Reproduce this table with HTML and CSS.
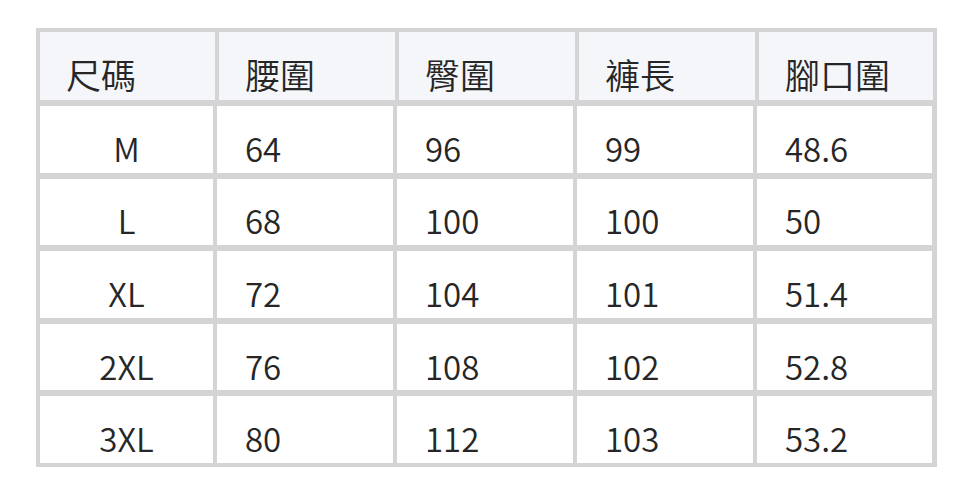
FILE: index.html
```html
<!DOCTYPE html>
<html lang="zh-Hant">
<head>
<meta charset="utf-8">
<link rel="stylesheet" href="styles.css">
<title>尺碼表</title>
</head>
<body>
<div class="table">
  <div class="row head">
    <div class="cell">尺碼</div>
    <div class="cell">腰圍</div>
    <div class="cell">臀圍</div>
    <div class="cell">褲長</div>
    <div class="cell">腳口圍</div>
  </div>
  <div class="body">
    <div class="row">
      <div class="cell size">M</div><div class="cell">64</div><div class="cell">96</div><div class="cell">99</div><div class="cell">48.6</div>
    </div>
    <div class="row">
      <div class="cell size">L</div><div class="cell">68</div><div class="cell">100</div><div class="cell">100</div><div class="cell">50</div>
    </div>
    <div class="row">
      <div class="cell size">XL</div><div class="cell">72</div><div class="cell">104</div><div class="cell">101</div><div class="cell">51.4</div>
    </div>
    <div class="row">
      <div class="cell size">2XL</div><div class="cell">76</div><div class="cell">108</div><div class="cell">102</div><div class="cell">52.8</div>
    </div>
    <div class="row">
      <div class="cell size">3XL</div><div class="cell">80</div><div class="cell">112</div><div class="cell">103</div><div class="cell">53.2</div>
    </div>
  </div>
</div>
</body>
</html>
```

FILE: styles.css
```css
html, body {
  margin: 0;
  padding: 0;
  background: #ffffff;
}
body {
  padding: 28px 35px 28px 36px;
  font-family: "Noto Sans CJK TC", "Noto Sans", sans-serif;
  font-weight: 350;
  color: #262626;
}
.table {
  width: 901px;
  height: 439px;
  box-sizing: border-box;
  background: #d4d4d4;
  padding: 4px;
  display: flex;
  flex-direction: column;
  gap: 6px;
}
.row {
  display: grid;
  grid-template-columns: 173px 176px 176px 176px 175px;
  column-gap: 4px;
  width: 892px;
}
.row.head {
  grid-template-columns: 175px 176px 176px 176px 174px;
  width: 893px;
  height: 68px;
  flex: none;
}
.body {
  flex: 1;
  display: flex;
  flex-direction: column;
  gap: 6px;
}
.body .row {
  flex: 1;
}
.cell {
  background: #ffffff;
  font-size: 33px;
  display: flex;
  align-items: center;
  padding: 17px 0 0 28px;
  box-sizing: border-box;
  white-space: nowrap;
}
.head .cell {
  background: #f5f6fa;
  font-size: 35px;
  padding: 15px 0 0 26px;
}
.cell.size {
  justify-content: center;
  padding-left: 0;
}
```
